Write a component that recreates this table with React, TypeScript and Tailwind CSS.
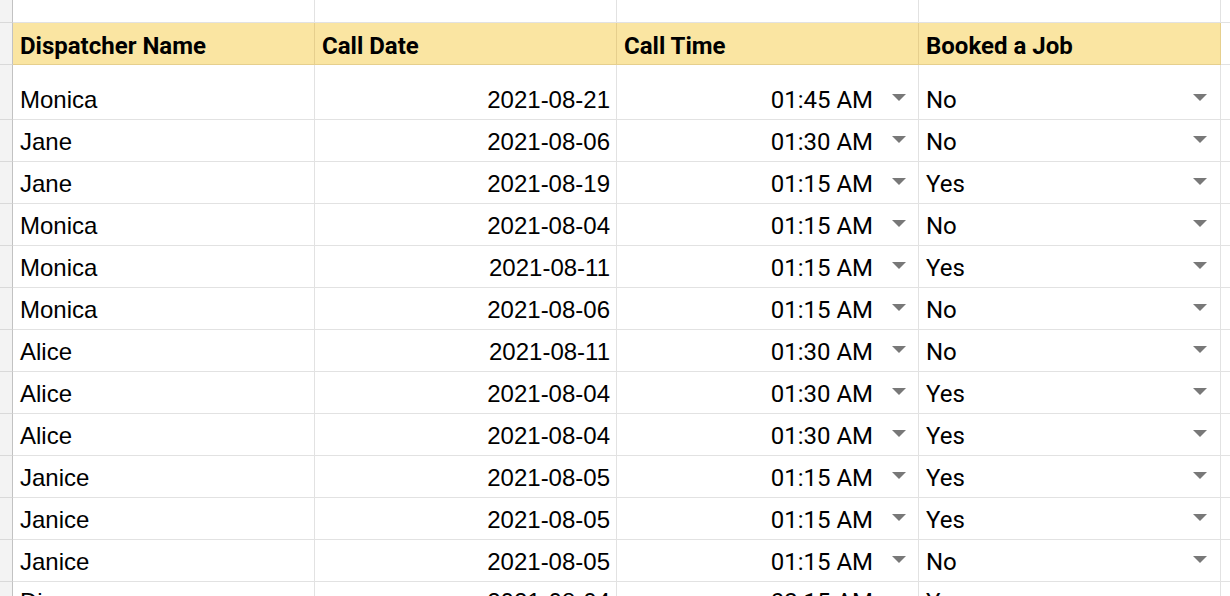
import React from "react";

const rows: [string, string, string, string][] = [
  ["Monica", "2021-08-21", "01:45 AM", "No"],
  ["Jane", "2021-08-06", "01:30 AM", "No"],
  ["Jane", "2021-08-19", "01:15 AM", "Yes"],
  ["Monica", "2021-08-04", "01:15 AM", "No"],
  ["Monica", "2021-08-11", "01:15 AM", "Yes"],
  ["Monica", "2021-08-06", "01:15 AM", "No"],
  ["Alice", "2021-08-11", "01:30 AM", "No"],
  ["Alice", "2021-08-04", "01:30 AM", "Yes"],
  ["Alice", "2021-08-04", "01:30 AM", "Yes"],
  ["Janice", "2021-08-05", "01:15 AM", "Yes"],
  ["Janice", "2021-08-05", "01:15 AM", "Yes"],
  ["Janice", "2021-08-05", "01:15 AM", "No"],
  ["Diana", "2021-08-04", "02:15 AM", "Yes"],
];

function Tri({ last }: { last?: boolean }) {
  return (
    <svg
      width="14"
      height="7"
      viewBox="0 0 14 7"
      className={`shrink-0 ${last ? "mt-[16px] self-start" : "mb-[11px]"}`}
    >
      <path d="M0 0H14L7 7Z" fill="#787878" />
    </svg>
  );
}

const arial = "font-['Liberation_Sans',Arial,sans-serif]";
const roboto = "font-['Roboto',sans-serif]";

function Strip({ h }: { h: string }) {
  return (
    <div
      className={`w-[13px] shrink-0 bg-[#f3f3f3] border-r border-b border-r-[#c2c2c2] border-b-[#d9d9d9] ${h}`}
    />
  );
}

function DataRow({
  r,
  first,
  last,
}: {
  r: [string, string, string, string];
  first?: boolean;
  last?: boolean;
}) {
  const h = first ? "h-[55px]" : "h-[42px]";
  const align = last ? "items-start pt-[8px]" : "items-end pb-[7px]";
  const cell = `w-[302px] shrink-0 border-r border-b border-[#e2e2e2] flex ${align} ${h}`;
  return (
    <div className="flex">
      <Strip h={h} />
      <div className={`${cell} pl-[7px] ${arial} text-[24px] leading-none text-black`}>{r[0]}</div>
      <div className={`${cell} justify-end pr-[6px] ${arial} text-[24px] leading-none text-black`}>{r[1]}</div>
      <div className={`${cell} justify-end pr-[12px] ${roboto} text-[24px] leading-none text-black`}>
        <span>{r[2]}</span>
        <span className="w-[19px]" />
        <Tri last={last} />
      </div>
      <div className={`${cell} pl-[7px] pr-[13px] ${roboto} text-[24px] leading-none text-black`}>
        <span className="flex-1">{r[3]}</span>
        <Tri last={last} />
      </div>
      <div className={`flex-1 border-b border-[#e2e2e2] ${h}`} />
    </div>
  );
}

export default function App() {
  const headers = ["Dispatcher Name", "Call Date", "Call Time", "Booked a Job"];
  return (
    <div className="w-[1230px] h-[596px] overflow-hidden bg-white">
      <div className="flex">
        <Strip h="h-[23px]" />
        {[0, 1, 2, 3].map((i) => (
          <div key={i} className="w-[302px] h-[23px] shrink-0 border-r border-b border-[#e2e2e2]" />
        ))}
        <div className="flex-1 h-[23px] border-b border-[#e2e2e2]" />
      </div>
      <div className="flex">
        <Strip h="h-[42px]" />
        {headers.map((t) => (
          <div
            key={t}
            className={`w-[302px] h-[42px] shrink-0 bg-[#fae5a2] border-r border-b border-[#e6cf8d] flex items-end pb-[6px] pl-[7px] ${roboto} font-bold text-[24px] leading-none text-black`}
          >
            {t}
          </div>
        ))}
        <div className="flex-1 h-[42px] border-b border-[#e2e2e2]" />
      </div>
      {rows.map((r, i) => (
        <DataRow key={i} r={r} first={i === 0} last={i === rows.length - 1} />
      ))}
    </div>
  );
}
